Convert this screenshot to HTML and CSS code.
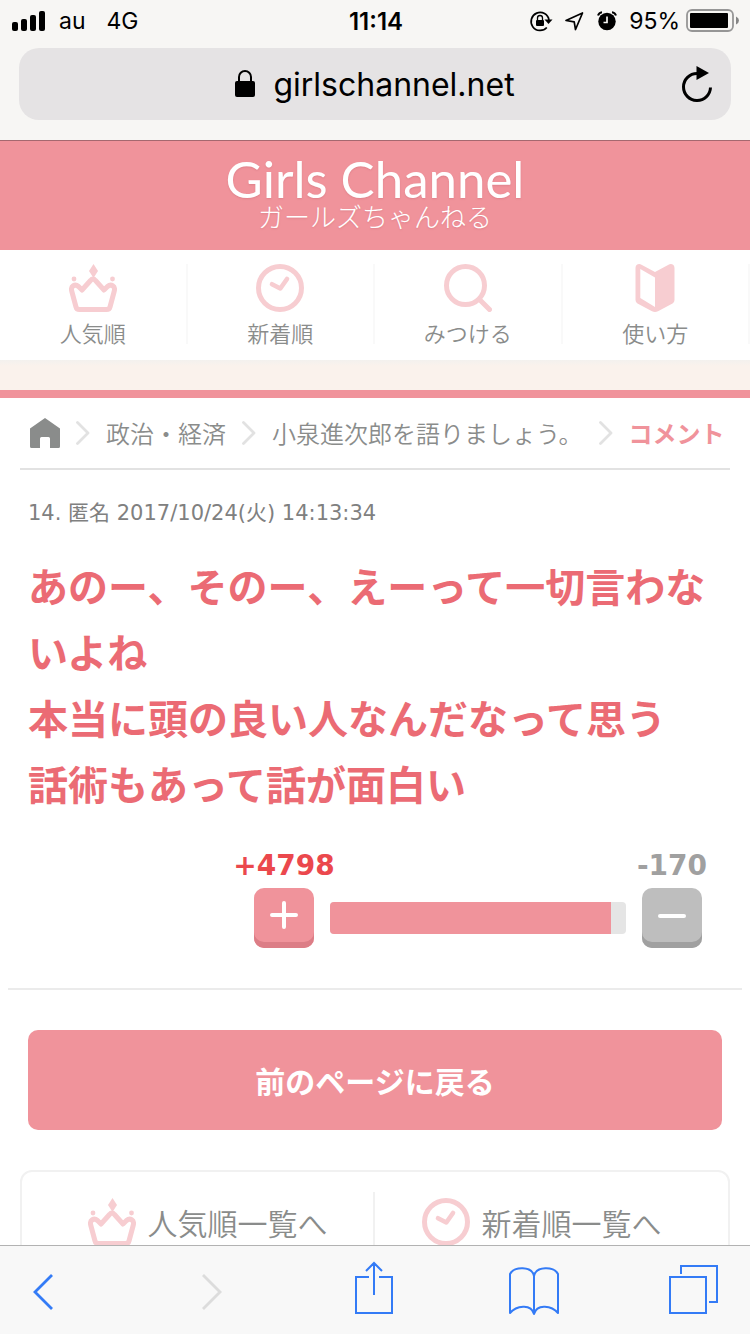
FILE: index.html
```html
<!DOCTYPE html>
<html lang="ja">
<head>
<meta charset="utf-8">
<meta name="viewport" content="width=device-width, initial-scale=1">
<title>Girls Channel ガールズちゃんねる</title>
<link rel="stylesheet" href="styles.css">
</head>
<body>
<svg class="defs" aria-hidden="true">
  <symbol id="crown" viewBox="0 0 48 48">
    <path d="M24.500 0 29 7 24.500 14 20 7Z" fill="currentColor"/>
    <circle cx="5" cy="15" r="2.400" fill="currentColor"/>
    <circle cx="43.500" cy="15" r="2.400" fill="currentColor"/>
    <path d="M10.500 45.500Q7.500 45.500 7 43L2.700 27C1.500 22 6 19.500 9.500 22.500L13 26 21.500 16.500Q24 13.500 26.500 16.500L35 26 38.500 22.500C42 19.500 46.500 22 45.300 27L41 43Q40.500 45.500 37.500 45.500Z" fill="none" stroke="currentColor" stroke-width="5" stroke-linejoin="round"/>
  </symbol>
  <symbol id="clock" viewBox="0 0 48 48">
    <circle cx="24" cy="24" r="21.500" fill="none" stroke="currentColor" stroke-width="5"/>
    <path d="M16 20.200 24.300 24.500 31 15" fill="none" stroke="currentColor" stroke-width="4.600" stroke-linecap="round" stroke-linejoin="round"/>
  </symbol>
  <symbol id="chevron" viewBox="0 0 14 24">
    <path d="M1.500 1.500 12 12 1.500 22.500" fill="none" stroke="currentColor" stroke-width="2.800" stroke-linecap="round" stroke-linejoin="round"/>
  </symbol>
</svg>

<div class="screen">
  <header class="browser-top">
    <div class="status">
      <div class="status-side">
        <svg class="signal" viewBox="0 0 33 20" aria-hidden="true"><rect y="11" width="6" height="9" rx="2"/><rect x="9" y="8" width="6" height="12" rx="2"/><rect x="18" y="4" width="6" height="16" rx="2"/><rect x="27" width="6" height="20" rx="2"/></svg>
        <span class="carrier">au</span>
        <span>4G</span>
      </div>
      <time class="time">11:14</time>
      <div class="status-side status-right">
        <svg class="st-icon" viewBox="0 0 24 24" aria-hidden="true"><path d="M17.800 18.500A9 9 0 1 1 20 11" fill="none" stroke="#000" stroke-width="1.700"/><path d="M15.500 10.500h8L19.500 15Z"/><rect x="7" y="11" width="8" height="6" rx="1"/><path d="M8.500 11V9a2.500 2.500 0 0 1 5 0v2" fill="none" stroke="#000" stroke-width="1.300"/></svg>
        <svg class="st-icon" viewBox="0 0 24 24" aria-hidden="true"><path d="M4 11.500 20.500 4 13.500 20.500 12.200 12.800Z" fill="none" stroke="#000" stroke-width="1.700" stroke-linejoin="round"/></svg>
        <svg class="st-icon" viewBox="0 0 24 24" aria-hidden="true"><circle cx="12" cy="12.500" r="8.700"/><path d="M3 6.500Q4 3.500 7 3.200M21 6.500Q20 3.500 17 3.200" fill="none" stroke="#000" stroke-width="2"/><path d="M12 7.500v6H8.500" fill="none" stroke="#f7f6f4" stroke-width="1.700"/></svg>
        <span class="percent">95%</span>
        <svg class="battery" viewBox="0 0 54 24" aria-hidden="true"><rect x="1" y="1" width="46" height="21" rx="5" fill="none" stroke="#969696" stroke-width="1.800"/><rect x="4" y="4" width="38" height="15" rx="1"/><path d="M50 7.500q3 1.500 3 4t-3 4Z" fill="#858585"/></svg>
      </div>
    </div>
    <div class="address">
      <button class="url" type="button">
        <svg class="lock" viewBox="0 0 20 28" aria-hidden="true"><rect y="11" width="20" height="16" rx="2"/><path d="M4 12V7a6 6 0 0 1 12 0v5" fill="none" stroke="#000" stroke-width="2"/></svg>
        girlschannel.net
      </button>
      <button class="reload" type="button" aria-label="再読み込み">
        <svg viewBox="0 0 32 36" aria-hidden="true"><path d="M16 7.500A13.500 13.500 0 1 0 29.500 21.500" fill="none" stroke="#000" stroke-width="3"/><path d="M15.500 0 28 7 15.500 14Z"/></svg>
      </button>
    </div>
  </header>

  <main class="page">
    <a class="brand" href="#">
      <span class="brand-name">Girls Channel</span>
      <span class="brand-kana">ガールズちゃんねる</span>
    </a>
    <nav class="tabs" aria-label="メニュー">
      <a class="tab" href="#"><svg class="icon" aria-hidden="true"><use href="#crown"/></svg>人気順</a>
      <a class="tab" href="#"><svg class="icon" aria-hidden="true"><use href="#clock"/></svg>新着順</a>
      <a class="tab" href="#"><svg class="icon" viewBox="0 0 48 48" aria-hidden="true"><circle cx="21.500" cy="21.500" r="19" fill="none" stroke="currentColor" stroke-width="5"/><path d="M36 36l9.500 9.500" stroke="currentColor" stroke-width="5" stroke-linecap="round"/></svg>みつける</a>
      <a class="tab" href="#"><svg class="icon" viewBox="0 0 48 48" aria-hidden="true"><path fill="currentColor" fill-rule="evenodd" d="M4.500 4C4.500 1 7.500-1 10.500 .7L24 8 37.500 .7C40.500-1 43.500 1 43.500 4V36Q43.500 38 41.500 39.500L27 47.200Q24 48.800 21 47.200L6.500 39.500Q4.500 38 4.500 36ZM9.300 5V34L24 43V13.500Z"/></svg>使い方</a>
    </nav>
    <div class="band"></div>

    <nav class="crumbs" aria-label="パンくず">
      <a class="home" href="#" aria-label="ホーム"><svg viewBox="0 0 30 30" aria-hidden="true"><path d="M15 0 30 10.500V28.500Q30 30 28.500 30H20V20.500Q20 19 18.500 19H11.500Q10 19 10 20.500V30H1.500Q0 30 0 28.500V10.500Z" fill="#8a8c8b"/></svg></a>
      <svg class="sep" aria-hidden="true"><use href="#chevron"/></svg>
      <a href="#">政治・経済</a>
      <svg class="sep" aria-hidden="true"><use href="#chevron"/></svg>
      <a href="#">小泉進次郎を語りましょう。</a>
      <svg class="sep" aria-hidden="true"><use href="#chevron"/></svg>
      <span class="current">コメント</span>
    </nav>

    <article class="comment">
      <p class="meta">14. 匿名 2017/10/24(火) 14:13:34</p>
      <p class="body">あのー、そのー、えーって一切言わないよね<br>本当に頭の良い人なんだなって思う<br>話術もあって話が面白い</p>
      <div class="votes">
        <div class="vote plus">
          <span class="count">+4798</span>
          <button class="vote-btn" type="button" aria-label="プラス"><svg viewBox="0 0 28 28" aria-hidden="true"><path d="M2 14H26M14 2V26"/></svg></button>
        </div>
        <div class="bar"><div class="bar-fill"></div></div>
        <div class="vote minus">
          <span class="count">-170</span>
          <button class="vote-btn" type="button" aria-label="マイナス"><svg viewBox="0 0 28 28" aria-hidden="true"><path d="M2 15H26"/></svg></button>
        </div>
      </div>
    </article>

    <button class="back-btn" type="button">前のページに戻る</button>

    <nav class="lists" aria-label="一覧">
      <a class="list-link" href="#"><svg class="icon" aria-hidden="true"><use href="#crown"/></svg>人気順一覧へ</a>
      <a class="list-link" href="#"><svg class="icon" aria-hidden="true"><use href="#clock"/></svg>新着順一覧へ</a>
    </nav>
  </main>

  <footer class="toolbar">
    <button type="button" aria-label="戻る"><svg viewBox="0 0 50 56" aria-hidden="true"><path d="M19 13 2 30 19 47" stroke-width="2.800"/></svg></button>
    <button class="off" type="button" aria-label="進む" disabled><svg viewBox="0 0 50 56" aria-hidden="true"><path d="M11 13 28 30 11 47" stroke-width="2.800"/></svg></button>
    <button type="button" aria-label="共有"><svg viewBox="0 0 50 56" aria-hidden="true"><path d="M18 15H5V51H41V15H28M23 33V2M15 9 23 1 31 9"/></svg></button>
    <button type="button" aria-label="ブックマーク"><svg viewBox="0 0 50 56" aria-hidden="true"><path stroke-linejoin="round" d="M24 14C22 4 4 4 0 12V51C6 44 21 41 24 52C27 41 42 44 48 51V12C44 4 26 4 24 14V52"/></svg></button>
    <button type="button" aria-label="タブ"><svg viewBox="0 0 50 56" aria-hidden="true"><path d="M1 15H37V51H1ZM12 12V4H48V40H40"/></svg></button>
  </footer>
</div>
</body>
</html>
```
FILE: styles.css
```css
* {
  box-sizing: border-box;
}

body {
  margin: 0;
  background: #fff;
  color: #8a8c8b;
  font-family: "Noto Sans CJK JP", sans-serif;
}

a {
  color: inherit;
  text-decoration: none;
}

button {
  padding: 0;
  border: 0;
  background: none;
  font: inherit;
  color: inherit;
}

svg {
  display: block;
  flex: none;
}

.defs {
  position: absolute;
  width: 0;
  height: 0;
}

.screen {
  display: grid;
  grid-template-rows: auto minmax(0, 1fr) auto;
  grid-template-columns: minmax(0, 1fr);
  height: 100vh;
}

/* browser chrome */
.browser-top {
  padding-bottom: 20px;
  border-bottom: 1px solid #a5686f;
  background: #f7f6f4;
  color: #000;
  font-family: Inter, "Noto Sans CJK JP", sans-serif;
}

.status {
  display: grid;
  grid-template-columns: 1fr auto 1fr;
  align-items: center;
  height: 42px;
  padding: 0 10px 0 12px;
  font-size: 23px;
}

.status-side {
  display: flex;
  align-items: center;
}

.status-right {
  justify-content: flex-end;
}

.signal {
  width: 33px;
  height: 20px;
}

.carrier {
  margin: 0 21px 0 14px;
}

.time {
  font-size: 24px;
  font-weight: 600;
}

.st-icon {
  width: 24px;
  height: 24px;
  margin-right: 9px;
}

.percent {
  margin: 0 6px 0 1px;
}

.battery {
  width: 54px;
  height: 24px;
}

.address {
  display: flex;
  align-items: center;
  height: 72px;
  margin: 6px 19px 0;
  padding: 0 18px 0 50px;
  border-radius: 20px;
  background: #e5e3e4;
}

.url {
  display: flex;
  flex: 1;
  align-items: center;
  justify-content: center;
  gap: 18px;
  font-size: 32px;
}

.lock {
  width: 20px;
  height: 28px;
}

.reload svg {
  width: 32px;
  height: 36px;
}

/* site header */
.page {
  overflow: hidden;
}

.brand {
  display: flex;
  flex-direction: column;
  align-items: center;
  height: 109px;
  padding-top: 12px;
  background: #f0939b;
  color: #fff;
  text-shadow: 0 1px 2px #de828b;
}

.brand-name {
  font-family: Lato, sans-serif;
  font-size: 51px;
  line-height: 52px;
}

.brand-kana {
  font-size: 26px;
  font-weight: 300;
  line-height: 22px;
}

.tabs {
  display: grid;
  grid-template-columns: repeat(4, 1fr);
  padding: 14px 0 16px;
}

.tab {
  display: flex;
  flex-direction: column;
  align-items: center;
  gap: 8px;
  border-right: 2px solid #f9f9f9;
  font-size: 22px;
  font-weight: 350;
  line-height: 24px;
}

.icon {
  width: 48px;
  height: 48px;
  color: #f7cdd1;
}

.band {
  height: 38px;
  border-bottom: 8px solid #f0939b;
  background: linear-gradient(#f3f1ee, #faf2ec 6px);
}

/* breadcrumb */
.crumbs {
  display: flex;
  align-items: center;
  gap: 16px;
  margin: 0 20px;
  padding: 20px 0 20px 10px;
  border-bottom: 2px solid #e2e2e2;
  font-size: 24px;
  font-weight: 350;
  line-height: 30px;
  white-space: nowrap;
}

.home svg {
  width: 30px;
  height: 30px;
}

.sep {
  width: 14px;
  height: 24px;
  color: #e2e2e2;
}

.current {
  color: #f0939b;
  font-weight: 700;
}

/* comment */
.comment {
  margin: 0 8px;
  padding: 28px 20px 40px;
  border-bottom: 2px solid #ebebeb;
}

.meta {
  margin: 0;
  color: #808080;
  font-family: "DejaVu Sans", "Noto Sans CJK JP", sans-serif;
  font-size: 21px;
  line-height: 30px;
}

.body {
  margin: 24px 0 32px;
  color: #eb6b74;
  font-size: 40px;
  font-weight: 700;
  line-height: 66px;
}

.votes {
  display: flex;
  align-items: flex-end;
  justify-content: flex-end;
  gap: 16px;
  padding-right: 20px;
}

.vote {
  display: flex;
  flex-direction: column;
  align-items: center;
  gap: 4px;
  width: 60px;
}

.count {
  font-family: "DejaVu Sans", sans-serif;
  font-size: 28px;
  font-weight: 700;
  line-height: 36px;
}

.plus .count {
  color: #eb484d;
}

.minus .count {
  color: #a0a0a0;
}

.vote-btn {
  display: flex;
  justify-content: center;
  width: 60px;
  height: 60px;
  padding-top: 13px;
  border-radius: 10px;
}

.plus .vote-btn {
  background: #f0939b;
  box-shadow: inset 0 -6px #dc7d86;
}

.minus .vote-btn {
  background: #bebebe;
  box-shadow: inset 0 -6px #a0a0a0;
}

.vote-btn svg {
  width: 28px;
  height: 28px;
  fill: none;
  stroke: #fff;
  stroke-width: 4;
  stroke-linecap: round;
}

.bar {
  flex: 1;
  max-width: 296px;
  height: 32px;
  margin-bottom: 14px;
  overflow: hidden;
  border-radius: 4px;
  background: #e5e5e5;
}

.bar-fill {
  width: 95%;
  height: 100%;
  background: #f0939b;
}

.back-btn {
  display: block;
  width: calc(100% - 56px);
  height: 100px;
  margin: 40px 28px;
  border-radius: 10px;
  background: #f0939b;
  color: #fff;
  font-size: 30px;
  font-weight: 700;
}

.lists {
  display: grid;
  grid-template-columns: 1fr 1fr;
  margin: 0 20px;
  padding: 20px;
  border: 2px solid #f1f1f1;
  border-radius: 12px;
}

.list-link {
  display: flex;
  align-items: center;
  justify-content: center;
  gap: 12px;
  padding: 6px 0;
  font-size: 30px;
  font-weight: 350;
  line-height: 48px;
}

.list-link:first-child {
  border-right: 2px solid #f1f1f1;
}

/* browser toolbar */
.toolbar {
  display: flex;
  justify-content: space-between;
  padding: 16px 31px 16px 33px;
  border-top: 1px solid #b2b2b2;
  background: #f8f8f8;
  color: #347bf6;
}

.toolbar svg {
  width: 50px;
  height: 56px;
  overflow: visible;
  fill: none;
  stroke: currentColor;
  stroke-width: 2;
}

.toolbar .off {
  color: #dcdcdc;
}
```
